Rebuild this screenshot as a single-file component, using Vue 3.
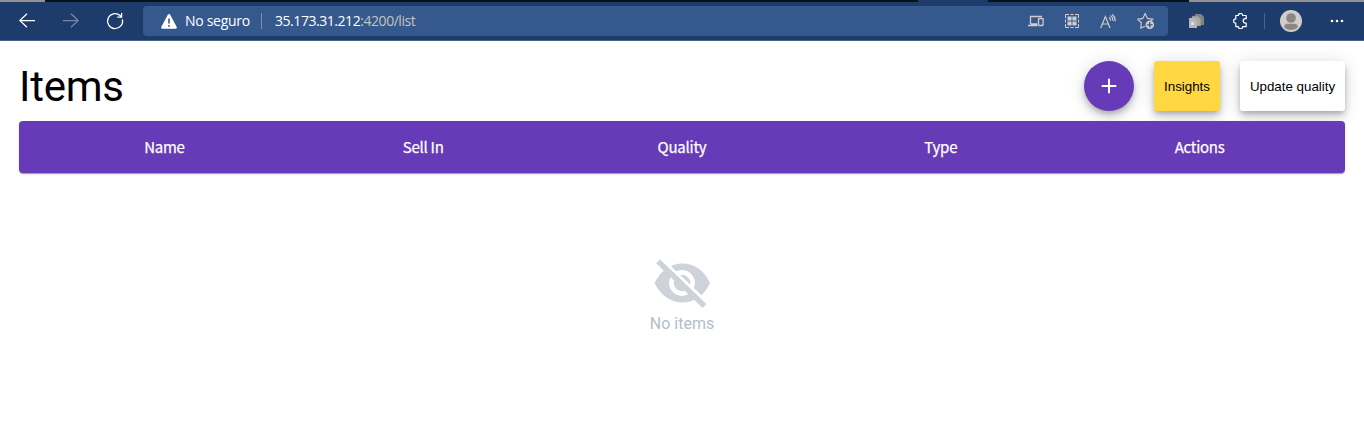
<script setup>
const columns = ['Name', 'Sell In', 'Quality', 'Type', 'Actions']
</script>

<template>
  <div class="window">
    <div class="tabs"><i class="tab-left"></i><i class="tab-mid"></i><i class="tab-active"></i><i class="tab-dark"></i><i class="tab-right"></i></div>
    <header class="browser">
      <nav class="nav">
        <svg width="16" height="16" viewBox="0 0 16 16" class="line"><path d="M16 7.5H.8M8 .8.8 7.5 8 14.2" /></svg>
        <svg width="16" height="16" viewBox="0 0 16 16" class="line dim"><path d="M0 7.5h15.2M8 .8l7.2 6.7L8 14.2" /></svg>
        <svg width="18" height="18" viewBox="0 0 18 18" class="line"><path d="M16.4 7.3A7.5 7.5 0 1 1 13.8 3.2L15.6 5M15.6 1v4.2h-4.4" /></svg>
      </nav>
      <div class="address">
        <svg class="warn" width="16" height="15" viewBox="0 0 16 15"><path d="M6.8.8q1.2-1.6 2.4 0l6.4 12q.7 2-1.2 2H1.6q-1.9 0-1.2-2z" fill="#fff" /><path d="M8 4.4v5M8 11v1.7" stroke="#36598d" stroke-width="1.6" /></svg>
        <span class="secure">No seguro</span>
        <i class="divider"></i>
        <span class="url">35.173.31.212<span class="path">:4200/list</span></span>
        <div class="tools">
          <svg width="16" height="12" viewBox="0 0 16 12" fill="none" stroke="#d0cdca" stroke-width="1.3"><path d="M2.5 9V1.5H14M0 10.5h9.5M2.5 9h7" /><rect x="10.5" y="3.5" width="4.6" height="7" rx=".7" /></svg>
          <svg width="14" height="14" viewBox="0 0 14 14" fill="none" stroke="#d0cdca"><path d="M.5 4V.5H4M5.5.5h3M10 .5h3.5V4M13.5 5.5v3M13.5 10v3.5H10M8.5 13.5h-3M4 13.5H.5V10M.5 8.5v-3" /><path d="M2.5 2.5h4.1v4.1H2.5zM7.4 2.5h4.1v4.1H7.4zM2.5 7.4h4.1v4.1H2.5zM7.4 7.4h4.1v4.1H7.4z" fill="#d0cdca" stroke="none" /></svg>
          <svg width="16" height="15" viewBox="0 0 16 15" fill="none" stroke="#d0cdca" stroke-width="1.2"><path d="M.7 14 5.4 2.5 10 14M2.3 10h6.2M9 3.2q1.6 1.2 1.6 3.6M10.5 1.6q2.7 1.9 2.4 5.4M12.2.4q3.4 2.6 2.8 7" /></svg>
          <svg width="18" height="18" viewBox="0 0 18 18" fill="none" stroke="#d0cdca" stroke-width="1.1"><path d="M8 14.2 3.7 16l.7-5.2L.8 7.2l5-.8L8.2 1.5l2.3 4.9 5.3.8-2 2" /><circle cx="12.8" cy="12.8" r="4.3" fill="#d0cdca" stroke="none" /><path d="M12.8 10v5.6M10 12.8h5.6" stroke="#36598d" stroke-width="1.3" /></svg>
        </div>
      </div>
      <svg class="copies" width="15" height="14" viewBox="0 0 15 14"><path d="M6 0h6l3 3v8H6z" fill="#858484" /><path d="M3 2h6l3 3v7H3z" fill="#a8a8a8" stroke="#777" stroke-width=".5" /><path d="M0 4h5l3 3v7H0z" fill="#b6b6b6" /><path d="M2 8h3v3H2z" fill="#ddd" /></svg>
      <svg class="puzzle" width="15" height="16" viewBox="0 0 15 16" fill="none" stroke="#fff" stroke-width="1.2"><path d="M2.8 2.5h2.5a2.2 2.2 0 0 1 4.4 0h3.5v3.2h-.8a2.2 2.2 0 0 0 0 4.4h.8v3.5H9.7a2.2 2.2 0 0 1-4.4 0H2.8v-3.4a2.2 2.2 0 0 1 0-4.4z" stroke-linejoin="round" /></svg>
      <i class="split"></i>
      <svg class="avatar" width="22" height="22" viewBox="0 0 22 22"><circle cx="11" cy="11" r="11" fill="#d0cdcb" /><circle cx="11" cy="8" r="4.8" fill="#898684" /><path d="M4.2 17.5q0-3.7 3.2-3.7h7.2q3.2 0 3.2 3.7-6.8 5-13.6 0z" fill="#898684" /></svg>
      <svg class="dots" width="14" height="4" viewBox="0 0 14 4" fill="#fff"><circle cx="2" cy="2" r="1.3" /><circle cx="7" cy="2" r="1.3" /><circle cx="12" cy="2" r="1.3" /></svg>
    </header>
    <main class="page">
      <div class="heading">
        <h1>Items</h1>
        <div class="actions">
          <button class="add" aria-label="Add"><svg width="16" height="16" viewBox="0 0 16 16"><path d="M8 .7v14.6M.7 8h14.6" stroke="#fff" stroke-width="2" /></svg></button>
          <button class="insights">Insights</button>
          <button class="update">Update quality</button>
        </div>
      </div>
      <div class="table-head"><span v-for="column in columns" :key="column">{{ column }}</span></div>
      <section class="empty">
        <svg width="58" height="50" viewBox="0 0 58 50">
          <path d="M1.5 24C8 11 18 4.5 29.500 4.500S51 11 57 24C51 37 41 43.500 29.500 43.500S8 37 1.500 24z" fill="#ced2d9" />
          <circle cx="29" cy="24" r="10.600" fill="none" stroke="#fff" stroke-width="4.600" />
          <path d="M27.500 19.500q5 0 5.500 6.500z" fill="#fff" stroke="#fff" stroke-width="1" />
          <path d="M8.500 .2 54.500 44.200" stroke="#fff" stroke-width="3" />
          <path d="M5 2.200 51.500 47" stroke="#ced2d9" stroke-width="5.400" />
        </svg>
        <p>No items</p>
      </section>
    </main>
  </div>
</template>

<style>
body { background: #fff; }
</style>
<style scoped>
* { box-sizing: border-box; }
.window { height: 432px; overflow: hidden; font-family: Roboto, sans-serif; }
.tabs { display: flex; height: 2px; background: #1d3b6b; }
.tab-left { width: 45px; background: #959391; }
.tab-mid { width: 873px; background: #07101b; }
.tab-active { width: 70px; }
.tab-dark { width: 201px; background: #07101b; }
.tab-right { flex: 1; background: #959391; }
.browser { display: flex; align-items: center; height: 39px; padding-bottom: 1px; background: #1d3b6b; border-bottom: 1px solid #486388; }
.nav { display: flex; align-items: center; width: 143px; padding-left: 19px; gap: 27.5px; }
.line { fill: none; stroke: #fff; stroke-width: 1.25; }
.dim { opacity: .4; }
.address { display: flex; align-items: center; width: 1025px; height: 30px; padding: 0 13px 0 18px; margin-top: 1px; background: #36598d; border-radius: 4px; color: #fff; font: 14px/18px "Open Sans", sans-serif; }
.secure { width: 66px; margin-left: 8px; white-space: nowrap; letter-spacing: -.3px; }
.divider { width: 1px; height: 16px; margin: 0 13px 0 10px; background: #7890b3; }
.url { letter-spacing: -.45px; }
.path { color: #c5c3c2; }
.tools { display: flex; align-items: center; gap: 21px; margin-left: auto; }
.copies { margin-left: 21px; }
.puzzle { margin-left: 29px; }
.split { width: 1px; height: 16px; margin-left: 16px; background: #4b648a; }
.avatar { margin-left: 15px; }
.dots { margin-left: 28px; }
.page { padding: 20px 19px; }
.heading { display: flex; justify-content: space-between; height: 50px; }
h1 { margin: 0; font: 400 42px/52px Roboto, sans-serif; letter-spacing: -.25px; color: #000; }
.actions { display: flex; gap: 20px; }
button { height: 50px; padding: 0; border: 0; border-radius: 3px; font: 13.333px "Liberation Sans", sans-serif; color: #000; box-shadow: 0 3px 5px -1px rgba(0,0,0,.2), 0 6px 10px rgba(0,0,0,.14), 0 1px 18px rgba(0,0,0,.12); }
.add { display: flex; align-items: center; justify-content: center; width: 50px; border-radius: 50%; background: #673ab7; }
.insights { width: 66px; background: #ffd740; }
.update { width: 105px; background: #fff; }
.table-head { position: relative; display: grid; grid-template-columns: repeat(5, 1fr); height: 52px; margin-top: 10px; padding: 0 16px; border-radius: 4px; background: #673ab7; box-shadow: 0 2px 1px -1px rgba(0,0,0,.2), 0 1px 1px rgba(0,0,0,.14), 0 1px 3px rgba(0,0,0,.12); color: #fff; text-align: center; font: 400 15px/52px "Noto Sans CJK SC", sans-serif; letter-spacing: -.25px; -webkit-text-stroke: .25px #fff; }
.empty { display: flex; flex-direction: column; align-items: center; padding-top: 86px; color: #b5bdc8; }
.empty p { margin: 5px 0 0; font-size: 16px; line-height: 20px; }
</style>
